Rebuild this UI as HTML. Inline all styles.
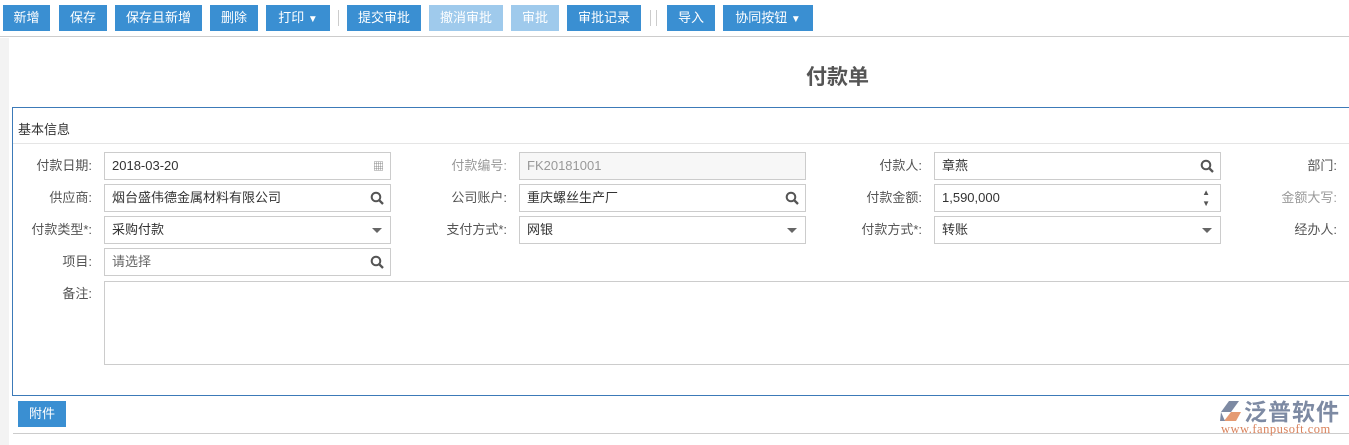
<!DOCTYPE html><html><head><meta charset="utf-8"><style>
*{box-sizing:border-box;margin:0;padding:0}
body{width:1349px;height:445px;overflow:hidden;background:#fff;font-family:"Liberation Sans","Noto Sans CJK SC",sans-serif;font-size:13px;color:#333;position:relative}
.a{position:absolute}
.b{position:absolute;top:5px;height:26px;background:#3a8fd2;color:#fff;font-size:13px;line-height:26px;text-align:center}
.b.l{background:#9fcaec}
.lb{position:absolute;text-align:right;width:100px;line-height:28px;color:#555}
.in{position:absolute;height:28px;border:1px solid #ccc;line-height:26px;padding-left:7px;background:#fff}
.ic{position:absolute;right:6px;top:6px}
.caret{position:absolute;right:8px;top:11px;width:0;height:0;border-left:5px solid transparent;border-right:5px solid transparent;border-top:5px solid #666}
</style></head><body>
<div class="a" style="left:0;top:0;width:1349px;height:37px;background:#fff;border-bottom:1px solid #ccc"></div>
<div class="b" style="left:3px;width:47px">新增</div>
<div class="b" style="left:59px;width:48px">保存</div>
<div class="b" style="left:115px;width:87px">保存且新增</div>
<div class="b" style="left:210px;width:48px">删除</div>
<div class="b" style="left:266px;width:64px">打印 <span style="font-size:10px">▼</span></div>
<div class="a" style="left:338px;top:10px;width:1px;height:16px;background:#ccc"></div>
<div class="b" style="left:347px;width:74px">提交审批</div>
<div class="b l" style="left:429px;width:74px">撤消审批</div>
<div class="b l" style="left:511px;width:48px">审批</div>
<div class="b" style="left:567px;width:74px">审批记录</div>
<div class="a" style="left:650px;top:10px;width:1px;height:16px;background:#ccc"></div>
<div class="a" style="left:656px;top:10px;width:1px;height:16px;background:#ccc"></div>
<div class="b" style="left:667px;width:48px">导入</div>
<div class="b" style="left:723px;width:90px">协同按钮 <span style="font-size:10px">▼</span></div>
<div class="a" style="left:0;top:38px;width:9px;height:407px;background:#f3f3f3"></div>
<div class="a" style="left:806px;top:61px;font-size:21px;font-weight:bold;color:#555">付款单</div>
<div class="a" style="left:12px;top:107px;width:1340px;height:289px;border:1px solid #3c7ab8;border-right:none"></div>
<div class="a" style="left:18px;top:119px;color:#333">基本信息</div>
<div class="a" style="left:13px;top:143px;width:1336px;height:1px;background:#e5e5e5"></div>

<div class="lb" style="left:-8px;top:152px">付款日期:</div>
<div class="in" style="left:104px;top:152px;width:287px">2018-03-20<span class="ic" style="color:#777;font-size:11px;top:1px">▦</span></div>
<div class="lb" style="left:407px;top:152px;color:#999">付款编号:</div>
<div class="in" style="left:519px;top:152px;width:287px;background:#f7f7f7;color:#999">FK20181001</div>
<div class="lb" style="left:822px;top:152px">付款人:</div>
<div class="in" style="left:934px;top:152px;width:287px">章燕<svg class="ic" width="14" height="14" viewBox="0 0 14 14"><circle cx="6" cy="6" r="4.3" fill="none" stroke="#555" stroke-width="2"/><path d="M9 9l4 4" stroke="#555" stroke-width="2.3"/></svg></div>
<div class="lb" style="left:1237px;top:152px">部门:</div>

<div class="lb" style="left:-8px;top:184px">供应商:</div>
<div class="in" style="left:104px;top:184px;width:287px">烟台盛伟德金属材料有限公司<svg class="ic" width="14" height="14" viewBox="0 0 14 14"><circle cx="6" cy="6" r="4.3" fill="none" stroke="#555" stroke-width="2"/><path d="M9 9l4 4" stroke="#555" stroke-width="2.3"/></svg></div>
<div class="lb" style="left:407px;top:184px">公司账户:</div>
<div class="in" style="left:519px;top:184px;width:287px">重庆螺丝生产厂<svg class="ic" width="14" height="14" viewBox="0 0 14 14"><circle cx="6" cy="6" r="4.3" fill="none" stroke="#555" stroke-width="2"/><path d="M9 9l4 4" stroke="#555" stroke-width="2.3"/></svg></div>
<div class="lb" style="left:822px;top:184px">付款金额:</div>
<div class="in" style="left:934px;top:184px;width:287px">1,590,000<span class="a" style="right:10px;top:0;font-size:8px;line-height:11px;color:#555;padding-top:2px">▲<br>▼</span></div>
<div class="lb" style="left:1237px;top:184px;color:#999">金额大写:</div>

<div class="lb" style="left:-8px;top:216px">付款类型*:</div>
<div class="in" style="left:104px;top:216px;width:287px">采购付款<span class="caret"></span></div>
<div class="lb" style="left:407px;top:216px">支付方式*:</div>
<div class="in" style="left:519px;top:216px;width:287px">网银<span class="caret"></span></div>
<div class="lb" style="left:822px;top:216px">付款方式*:</div>
<div class="in" style="left:934px;top:216px;width:287px">转账<span class="caret"></span></div>
<div class="lb" style="left:1237px;top:216px">经办人:</div>

<div class="lb" style="left:-8px;top:248px">项目:</div>
<div class="in" style="left:104px;top:248px;width:287px;color:#666">请选择<svg class="ic" width="14" height="14" viewBox="0 0 14 14"><circle cx="6" cy="6" r="4.3" fill="none" stroke="#555" stroke-width="2"/><path d="M9 9l4 4" stroke="#555" stroke-width="2.3"/></svg></div>

<div class="lb" style="left:-8px;top:280px">备注:</div>
<div class="in" style="left:104px;top:281px;width:1250px;height:84px"></div>

<div class="b" style="left:18px;top:401px;width:48px;height:26px">附件</div>
<div class="a" style="left:13px;top:433px;width:1336px;height:1px;background:#ccc"></div>
<svg class="a" style="left:1218px;top:399px" width="26" height="24" viewBox="0 0 26 24"><path d="M3 13L11 2h10L13 13z" fill="#7d8aa3"/><path d="M13 13h10l-5 9H6z" fill="#e59a72"/><path d="M3 13l4 9H2z" fill="#7d8aa3"/></svg>
<div class="a" style="left:1244px;top:397px;font-size:23px;color:#7d8aa3;font-weight:bold;font-family:'Noto Sans CJK SC',sans-serif;line-height:26px;letter-spacing:1px">泛普软件</div>
<div class="a" style="left:1221px;top:423px;font-size:12.5px;color:#d9815a;font-family:'Liberation Serif',serif;line-height:13px;letter-spacing:0.5px">www.fanpusoft.com</div>
</body></html>
